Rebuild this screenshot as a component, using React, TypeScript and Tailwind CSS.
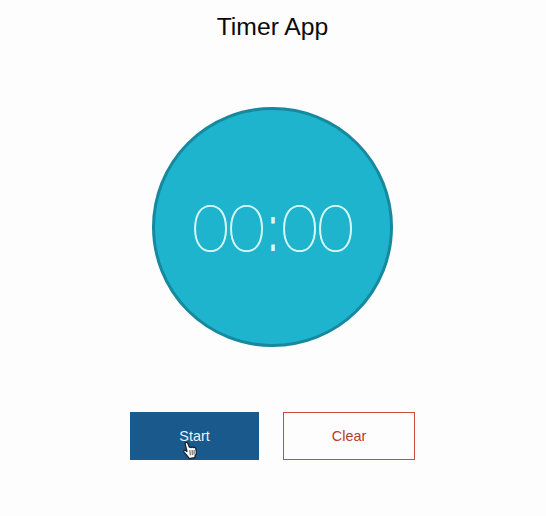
function HandCursor() {
  return (
    <svg className="absolute left-[52px] top-[29px]" width="16" height="19" viewBox="0 0 16 19" aria-hidden="true">
      <path
        d="M4 1.4C4.8 1.1 5.5 1.5 5.8 2.3L7.4 6.3C8.2 5.9 8.9 6 9.4 6.5C10.1 5.9 11 6 11.5 6.7C12.4 6.1 13.5 6.5 13.7 7.5C14.1 9.2 14.6 11 14.2 13L13 14.9V16.6L7 17.6C6.4 15.4 3.8 13.4 2 11C1.2 9.9 2.2 8.8 3.4 9.4L5 10.5L3.3 3.4C3 2.4 3.3 1.7 4 1.4Z"
        fill="#fff"
        stroke="#161c24"
        strokeWidth="1.2"
        strokeLinejoin="round"
      />
      <path d="M7.9 9.2L8.3 14.3M10.1 9L10.3 14.1M12.1 9V13.6" stroke="#39434d" strokeWidth=".9" />
    </svg>
  );
}

export default function App() {
  return (
    <main className="flex h-[516px] w-[546px] flex-col items-center bg-[#fdfdfd] pr-px font-['Liberation_Sans',Arial,sans-serif]">
      <h1 className="mt-[9px] h-9 text-[24.7px] leading-9 text-[#0a0a0a]">Timer App</h1>
      <section className="mt-[62px] flex h-60 w-[241px] items-center justify-center rounded-full border-[3px] border-[#17899f] bg-[#1eb4ce]">
        <div className="flex items-baseline pt-[2px] text-[64px] leading-none text-[#dcfbfa]">
          <span className="w-[72px] font-['Lato',sans-serif] font-thin tracking-[-1.1px] [-webkit-text-stroke:1.1px_#d4f7f8]">00</span>
          <span className="flex w-[17px] justify-center">
            <span className="scale-x-[0.55]">:</span>
          </span>
          <span className="w-[72px] font-['Lato',sans-serif] font-thin tracking-[-1.1px] [-webkit-text-stroke:1.1px_#d4f7f8]">00</span>
        </div>
      </section>
      <div className="mt-[65px] flex gap-6">
        <button className="relative h-12 w-[129px] bg-[#19598c] pt-px text-[14.4px] text-[#e8f3fa]">
          Start
          <HandCursor />
        </button>
        <button className="h-12 w-[132px] border border-[#cc4b3c] pt-px text-[14.4px] text-[#b83a2c]">Clear</button>
      </div>
    </main>
  );
}
